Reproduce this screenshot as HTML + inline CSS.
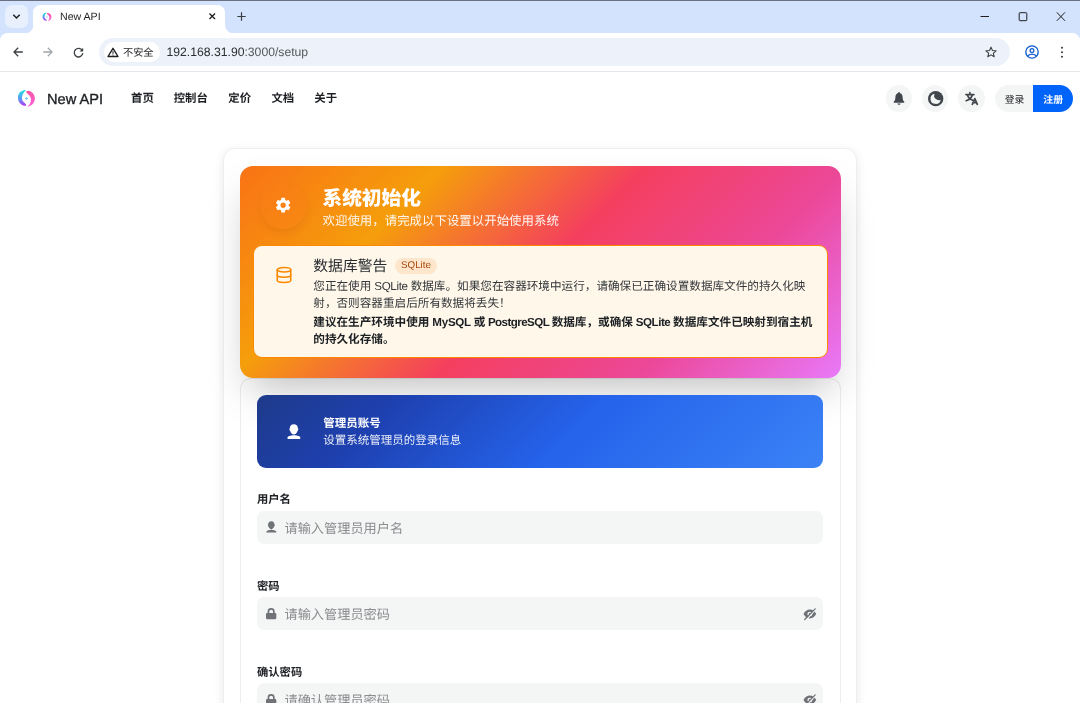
<!DOCTYPE html>
<html lang="zh-CN">
<head>
<meta charset="utf-8">
<title>New API</title>
<style>
*{box-sizing:border-box;margin:0;padding:0}
html,body{width:1080px;height:703px;overflow:hidden;background:#fff}
body{font-family:"Liberation Sans","Noto Sans CJK SC",sans-serif;color:#1c1f23;position:relative;-webkit-font-smoothing:antialiased;text-rendering:geometricPrecision}
#root{position:absolute;left:0;top:0;width:1080px;height:703px;will-change:transform}
.abs{position:absolute}
svg{position:absolute;overflow:visible}
/* browser chrome */
#topline{left:0;top:0;width:1080px;height:1px;background:#6b7180}
#tabstrip{left:0;top:0;width:1080px;height:44px;background:#d3e3fd}
#tab{left:33px;top:4.800px;width:192px;height:29.200px;background:#fff;border-radius:7.500px 7.500px 0 0}
#tabsearch{left:5px;top:5px;width:23px;height:23px;border-radius:7px;background:#e8f0fe}
#toolbar{left:0;top:33px;width:1080px;height:38px;background:#fff;border-radius:7.500px 7.500px 0 0}
#toolbarline{left:0;top:71px;width:1080px;height:1px;background:#e4e6e9}
#omni{left:99.400px;top:37.800px;width:911.100px;height:28.500px;border-radius:14.250px;background:#edf2fa}
#chip{left:104px;top:42px;width:56px;height:20px;border-radius:10px;background:#fff}
.la{white-space:pre}
.ctext{color:#1f1f1f;white-space:nowrap;line-height:16px}
/* page header */
.nav{font-size:11.4px;font-weight:700;color:#1c1f23;white-space:nowrap;line-height:16px;top:90.800px}
.circ{width:26.400px;height:26.700px;border-radius:50%;background:#f4f5f5;top:85px}
/* cards */
#outer{left:223px;top:148px;width:634px;height:600px;border-radius:12px;border:1px solid #eeeeef;background:#fff;box-shadow:0 3px 11px rgba(0,0,0,.09)}
#hero{left:240px;top:165.500px;width:601px;height:212px;border-radius:13px;background:linear-gradient(135deg,#f97316 0%,#f59e0b 25%,#f43f5e 50%,#ec4899 75%,#e879f9 100%);box-shadow:0 20px 40px -10px rgba(0,0,0,.25)}
#warn{left:253px;top:245px;width:574.8px;height:112.7px;border-radius:9px;background:#fff8ea;border:1px solid #fc8800}
#card2{left:240px;top:378px;width:601px;height:400px;border:1px solid rgba(28,31,35,.08);border-radius:11px;background:#fff}
#blue{left:257px;top:394.7px;width:566px;height:73.3px;border-radius:9px;background:linear-gradient(135deg,#1e3a8a 0%,#1e40af 22%,#2563eb 55%,#3b82f6 100%)}
.lbl{font-size:11.3px;font-weight:700;color:#1c1f23;left:257px;white-space:nowrap;line-height:16px}
.inp{left:257px;width:566px;height:33px;border-radius:7px;background:#f4f5f5}
.ph{font-size:13.200px;color:#8a8c8f;left:284.5px;white-space:nowrap;line-height:18px}
</style>
</head>
<body>
<div id="root">
<!-- ===== browser chrome ===== -->
<div class="abs" id="tabstrip"></div>
<div class="abs" id="topline"></div>
<div class="abs" id="tabsearch"></div>
<div class="abs" id="tab"></div>
<!-- tab outward bottom corners -->
<svg style="left:24.500px;top:24.500px" width="8.500" height="8.500" viewBox="0 0 6 6"><path d="M6 0V6H0A6 6 0 0 0 6 0Z" fill="#fff"/></svg>
<svg style="left:225px;top:24.500px" width="8.500" height="8.500" viewBox="0 0 6 6"><path d="M0 0V6H6A6 6 0 0 1 0 0Z" fill="#fff"/></svg>
<div class="abs" id="toolbar"></div>
<div class="abs" id="toolbarline"></div>
<div class="abs" id="omni"></div>
<div class="abs" id="chip"></div>
<div class="abs ctext" style="left:60px;top:8.5px;font-size:10.6px">New API</div>
<div class="abs ctext" style="left:123px;top:46px;font-size:10.200px">不安全</div>
<div class="abs ctext" style="left:166.500px;top:43.500px;font-size:12.200px;color:#2d2e30">192.168.31.90<span style="color:#55585c">:3000/setup</span></div>
<!-- chrome icons -->
<svg style="left:12px;top:12px" width="9" height="9" viewBox="0 0 9 9"><path d="M1.3 2.8L4.5 6 7.7 2.8" fill="none" stroke="#1f1f1f" stroke-width="1.5"/></svg>
<svg style="left:41.5px;top:11.5px" width="10" height="10" viewBox="5 5 19 19"><defs><linearGradient id="lgA" x1="0" y1="0" x2="0" y2="1"><stop offset="0" stop-color="#22e6e6"/><stop offset=".55" stop-color="#5b9bf0"/><stop offset="1" stop-color="#b537f7"/></linearGradient><linearGradient id="lgB" x1="0" y1="0" x2="0" y2="1"><stop offset="0" stop-color="#f857a6"/><stop offset="1" stop-color="#ff5ed8"/></linearGradient></defs><path d="M13.5 6C8 6.5 5.5 10 6 14.5C6.3 18.5 9.5 22 14 21.8C14.5 21 14 20 13 19.2C10.5 17.5 9.8 15.5 10 13.5C10.2 10.5 12 8 13.8 6.5Z" fill="url(#lgA)"/><path d="M14.3 7.6C15 6.5 17.5 6.5 19.5 8C22 10 23.2 12.5 22.8 15.5C22.3 19 19.5 22 15.5 22.8C17.5 21 19 18.5 19 15.5C19 12.5 16.5 10.5 14.8 9C14.2 8.5 14 8 14.3 7.6Z" fill="url(#lgB)"/><path d="M14.5 12.7L15.1 14 16.4 14.5 15.1 15 14.5 16.3 13.9 15 12.6 14.5 13.9 14Z" fill="#5bc0f5"/></svg>
<svg style="left:208.500px;top:13.400px" width="6.500" height="6.500" viewBox="0 0 7 7"><path d="M.5 .5L6.500 6.500M6.500 .5L.5 6.500" stroke="#1f1f1f" stroke-width="1.400" fill="none"/></svg>
<svg style="left:237.100px;top:12px" width="9" height="9" viewBox="0 0 9 9"><path d="M4.500 .3V8.700M.3 4.500H8.700" stroke="#3a3d42" stroke-width="1.200" fill="none"/></svg>
<!-- back / forward / reload -->
<svg style="left:13px;top:47px" width="10" height="10" viewBox="0 0 10 10"><path d="M9.8 5H1.2M5.2 .8L1 5 5.2 9.2" stroke="#3c4043" stroke-width="1.3" fill="none"/></svg>
<svg style="left:43px;top:47px" width="10" height="10" viewBox="0 0 10 10"><path d="M.2 5H8.8M4.8 .8L9 5 4.8 9.2" stroke="#a3a6aa" stroke-width="1.3" fill="none"/></svg>
<svg style="left:72.5px;top:46.5px" width="11" height="11" viewBox="0 0 11 11"><path d="M9.3 3.6A4.3 4.3 0 1 0 9.8 6.2" stroke="#3c4043" stroke-width="1.3" fill="none"/><path d="M10.2 .8V4.4H6.6Z" fill="#3c4043"/></svg>
<!-- not-secure triangle -->
<svg style="left:107.300px;top:47px" width="12" height="10.400" viewBox="0 0 12 10.400"><path d="M6 1.300L11 9.500H1Z" fill="none" stroke="#1f1f1f" stroke-width="1.400" stroke-linejoin="round"/><path d="M6 4.200V6.800M6 7.500V8.500" stroke="#1f1f1f" stroke-width="1.100"/></svg>
<!-- star -->
<svg style="left:984.5px;top:46px" width="12" height="12" viewBox="0 0 12 12"><path d="M6 1.1L7.45 4.5 11.1 4.8 8.35 7.2 9.2 10.8 6 8.9 2.8 10.8 3.65 7.2 .9 4.8 4.55 4.5Z" fill="none" stroke="#3c4043" stroke-width="1.1" stroke-linejoin="round"/></svg>
<!-- profile -->
<svg style="left:1025px;top:45px" width="14" height="14" viewBox="0 0 14 14"><defs><clipPath id="pc"><circle cx="7" cy="7" r="6.2"/></clipPath></defs><circle cx="7" cy="7" r="6.2" fill="none" stroke="#0b57d0" stroke-width="1.3"/><circle cx="7" cy="5.6" r="1.9" fill="none" stroke="#0b57d0" stroke-width="1.2"/><path d="M2.4 11.6C3.6 9.7 5.2 9.2 7 9.2S10.4 9.7 11.6 11.6" fill="none" stroke="#0b57d0" stroke-width="1.2" clip-path="url(#pc)"/></svg>
<!-- kebab -->
<svg style="left:1060px;top:46px" width="4" height="13" viewBox="0 0 4 13"><circle cx="2" cy="1.8" r="1.05" fill="#3c4043"/><circle cx="2" cy="6.2" r="1.05" fill="#3c4043"/><circle cx="2" cy="10.8" r="1.05" fill="#3c4043"/></svg>
<!-- window controls -->
<svg style="left:980px;top:12px" width="90" height="10" viewBox="0 0 90 10"><path d="M.5 4.5H9" stroke="#1f1f1f" stroke-width="1"/><rect x="39.2" y=".7" width="7.6" height="8" rx=".8" fill="none" stroke="#1f1f1f" stroke-width="1"/><path d="M76.8 .4L85 8.8M85 .4L76.8 8.8" stroke="#1f1f1f" stroke-width="1"/></svg>

<!-- ===== page header ===== -->
<svg style="left:12px;top:84px" width="30" height="28" viewBox="0 0 30 28"><path d="M13.5 6C8 6.5 5.5 10 6 14.5C6.3 18.5 9.5 22 14 21.8C14.5 21 14 20 13 19.2C10.5 17.5 9.8 15.5 10 13.5C10.2 10.5 12 8 13.8 6.5Z" fill="url(#lgA)"/><path d="M14.3 7.6C15 6.5 17.5 6.5 19.5 8C22 10 23.2 12.5 22.8 15.5C22.3 19 19.5 22 15.5 22.8C17.5 21 19 18.5 19 15.5C19 12.5 16.5 10.5 14.8 9C14.2 8.5 14 8 14.3 7.6Z" fill="url(#lgB)"/><path d="M14.5 12.7L15.1 14 16.4 14.5 15.1 15 14.5 16.3 13.9 15 12.6 14.5 13.9 14Z" fill="#5bc0f5"/></svg>
<div class="abs" id="brand" style="left:47px;top:91px;font-size:14.6px;font-weight:400;color:#1c1f23;line-height:18px;white-space:nowrap;-webkit-text-stroke:.35px #1c1f23">New API</div>
<div class="abs nav" style="left:131px">首页</div>
<div class="abs nav" style="left:173.7px">控制台</div>
<div class="abs nav" style="left:228.3px">定价</div>
<div class="abs nav" style="left:271.4px">文档</div>
<div class="abs nav" style="left:314.3px">关于</div>
<div class="abs circ" style="left:886px"></div>
<div class="abs circ" style="left:922px"></div>
<div class="abs circ" style="left:958.3px"></div>
<!-- bell -->
<svg style="left:893px;top:92px" width="12" height="13" viewBox="0 0 12 13"><path d="M6 .2C6.7 .2 7.2 .7 7.2 1.3C8.8 1.9 9.6 3.4 9.6 5.2C9.6 7.6 10.2 8.9 11.3 9.8C11.6 10.1 11.4 10.7 10.9 10.7H1.1C.6 10.7 .4 10.1 .7 9.8C1.8 8.9 2.4 7.6 2.4 5.2C2.4 3.4 3.2 1.9 4.8 1.3C4.8 .7 5.3 .2 6 .2Z" fill="#41464c"/><path d="M4.3 11.4H7.7C7.5 12.3 6.8 12.8 6 12.8S4.5 12.3 4.3 11.4Z" fill="#41464c"/></svg>
<!-- moon -->
<svg style="left:927.500px;top:90.500px" width="15.400" height="15.400" viewBox="-7.700 -7.700 15.400 15.400"><circle cx="0" cy="0" r="7.650" fill="#41464c"/><path d="M-1.281 -5.040A5.2 5.2 0 1 0 5.040 1.281A4.9 4.9 0 0 1 -1.281 -5.040Z" fill="#f4f5f5"/></svg>
<!-- translate -->
<svg style="left:965px;top:92px" width="13.5" height="13" viewBox="0 0 13.5 13"><path d="M.9 2.6H9M4.9 .6V2.6M2.4 2.800C3 5.200 4.800 7.200 7.600 8.200M7.400 2.800C6.800 5.400 4.600 7.800 1.100 8.800" fill="none" stroke="#41464c" stroke-width="1.600" stroke-linecap="round"/><path d="M7.300 12.300L9.800 6.600 12.300 12.300M8.100 10.700H11.500" fill="none" stroke="#41464c" stroke-width="1.700" stroke-linecap="round" stroke-linejoin="round"/></svg>
<div class="abs" style="left:994.600px;top:85px;width:39px;height:27px;border-radius:13.500px 0 0 13.500px;background:#f4f5f5"></div>
<div class="abs" style="left:1033.300px;top:85px;width:40px;height:27px;border-radius:0 13.500px 13.500px 0;background:#0064fa"></div>
<div class="abs" style="left:1004.800px;top:93.800px;font-size:9.800px;color:#1c1f23;line-height:14px;white-space:nowrap">登录</div>
<div class="abs" style="left:1043.300px;top:93.800px;font-size:10px;font-weight:700;color:#fff;line-height:14px;white-space:nowrap">注册</div>

<!-- ===== cards ===== -->
<div class="abs" id="outer"></div>
<div class="abs" id="card2"></div>
<div class="abs" id="hero"></div>
<div class="abs" style="left:260px;top:182px;width:46.5px;height:46.5px;border-radius:50%;background:rgba(249,125,22,.35);box-shadow:0 5px 10px -2px rgba(150,60,0,.16)"></div>
<!-- gear -->
<svg style="left:273.850px;top:196.250px" width="18.300" height="18.300" viewBox="0 0 24 24"><path fill="#fff" d="M19.14 12.94c.04-.3.06-.61.06-.94 0-.32-.02-.64-.07-.94l2.03-1.58a.49.49 0 0 0 .12-.61l-1.92-3.32a.488.488 0 0 0-.59-.22l-2.39.96c-.5-.38-1.03-.7-1.62-.94l-.36-2.54a.484.484 0 0 0-.48-.41h-3.84c-.24 0-.43.17-.47.41l-.36 2.54c-.59.24-1.13.57-1.62.94l-2.39-.96c-.22-.08-.47 0-.59.22L2.74 8.87c-.12.21-.08.47.12.61l2.03 1.58c-.05.3-.09.63-.09.94s.02.64.07.94l-2.03 1.58a.49.49 0 0 0-.12.61l1.92 3.32c.12.22.37.29.59.22l2.39-.96c.5.38 1.03.7 1.62.94l.36 2.54c.05.24.24.41.48.41h3.84c.24 0 .44-.17.47-.41l.36-2.54c.59-.24 1.13-.56 1.62-.94l2.39.96c.22.08.47 0 .59-.22l1.92-3.32c.12-.22.07-.47-.12-.61l-2.01-1.58zM12 15.6c-1.98 0-3.600-1.620-3.600-3.600s1.620-3.600 3.600-3.600 3.600 1.620 3.600 3.600-1.620 3.600-3.600 3.600z"/></svg>
<div class="abs" id="htitle" style="left:322.5px;top:186px;font-size:19.7px;font-weight:900;color:#fff;line-height:26px;white-space:nowrap">系统初始化</div>
<div class="abs" id="hsub" style="left:322.5px;top:211.700px;font-size:12.450px;color:rgba(255,255,255,.93);line-height:18px;white-space:nowrap">欢迎使用，请完成以下设置以开始使用系统</div>
<div class="abs" id="warn"></div>
<!-- database -->
<svg style="left:274.700px;top:266.400px" width="18" height="18" viewBox="0 0 24 24" fill="none" stroke="#fc8800" stroke-width="2.100" stroke-linecap="round" stroke-linejoin="round"><ellipse cx="12" cy="5" rx="9" ry="3"/><path d="M3 5V19A9 3 0 0 0 21 19V5"/><path d="M3 12A9 3 0 0 0 21 12"/></svg>
<div class="abs" id="wtitle" style="left:313.3px;top:256.5px;font-size:14.800px;color:#282b30;line-height:20px;white-space:nowrap;font-weight:400">数据库警告</div>
<div class="abs" style="left:394.8px;top:257.6px;width:42px;height:16.3px;border-radius:8.2px;background:#fde6cb"></div>
<div class="abs" id="tag" style="left:401px;top:259.8px;font-size:9.8px;color:#a8480f;line-height:12px;white-space:nowrap">SQLite</div>
<div class="abs" id="wbody" style="left:313.3px;top:277.5px;width:510px;font-size:11.62px;color:#33363b;line-height:17px;white-space:nowrap">您正在使用<span class="la" style="letter-spacing:-.33px"> SQLite </span>数据库。如果您在容器环境中运行，请确保已正确设置数据库文件的持久化映<br>射，否则容器重启后所有数据将丢失！</div>
<div class="abs" id="wbold" style="left:313.3px;top:314px;width:510px;font-size:11.62px;font-weight:700;color:#1c1f23;line-height:17px;white-space:nowrap">建议在生产环境中使用<span class="la" style="letter-spacing:-.28px"> MySQL </span>或<span class="la" style="letter-spacing:-.58px"> PostgreSQL </span>数据库，或确保<span class="la" style="letter-spacing:-.46px"> SQLite </span>数据库文件已映射到宿主机<br>的持久化存储。</div>

<div class="abs" id="blue"></div>
<!-- user white -->
<svg style="left:287px;top:423.5px" width="13.800" height="15" viewBox="0 0 13.800 15"><path d="M6.850 .2C9.300 .2 10.800 1.800 10.800 3.900C10.800 4.300 11.350 4.600 11.350 5.300C11.350 6.100 10.850 6.500 10.600 6.700C10.100 8.800 8.500 10.400 6.850 10.400S3.600 8.800 3.100 6.700C2.850 6.500 2.350 6.100 2.350 5.300C2.350 4.600 2.900 4.300 2.900 3.900C2.900 1.800 4.400 .2 6.850 .2Z" fill="#fff"/><path d="M.4 14C.4 12.300 3.500 11.300 6.900 11.300S13.400 12.300 13.400 14C13.400 14.600 13 14.900 12.500 14.900H1.300C.8 14.900 .4 14.600 .4 14Z" fill="#fff"/></svg>
<div class="abs" id="btitle" style="left:323.2px;top:415.800px;font-size:11.5px;font-weight:700;color:#fff;line-height:16px;white-space:nowrap">管理员账号</div>
<div class="abs" id="bsub" style="left:323.2px;top:432.700px;font-size:11.5px;color:rgba(255,255,255,.9);line-height:16px;white-space:nowrap">设置系统管理员的登录信息</div>

<div class="abs lbl" style="top:492.200px">用户名</div>
<div class="abs inp" style="top:510.7px"></div>
<div class="abs ph" style="top:519.600px">请输入管理员用户名</div>
<div class="abs lbl" style="top:578.500px">密码</div>
<div class="abs inp" style="top:596.9px"></div>
<div class="abs ph" style="top:605.800px">请输入管理员密码</div>
<div class="abs lbl" style="top:664.500px">确认密码</div>
<div class="abs inp" style="top:683px"></div>
<div class="abs ph" style="top:691.800px">请确认管理员密码</div>
<!-- input icons -->
<svg style="left:266px;top:521.100px" width="10.700" height="11.700" viewBox="0 0 13.800 15"><path d="M6.850 .2C9.300 .2 10.800 1.800 10.800 3.900C10.800 4.300 11.350 4.600 11.350 5.300C11.350 6.100 10.850 6.500 10.600 6.700C10.100 8.800 8.500 10.400 6.850 10.400S3.600 8.800 3.100 6.700C2.850 6.500 2.350 6.100 2.350 5.300C2.350 4.600 2.900 4.300 2.900 3.900C2.900 1.800 4.400 .2 6.850 .2Z" fill="#6f7277"/><path d="M6.200 10V12H7.600V10Z" fill="#6f7277" opacity=".55"/><path d="M.4 14C.4 12.300 3.500 11.700 6.900 11.700S13.400 12.300 13.400 14C13.400 14.600 13 14.900 12.500 14.900H1.300C.8 14.900 .4 14.600 .4 14Z" fill="#6f7277"/></svg>
<svg style="left:266.300px;top:607.9px" width="10.300" height="11.200" viewBox="0 0 10.300 11.200"><path d="M2.450 5.600V3.500C2.450 2 3.600 .85 5.150 .85S7.850 2 7.850 3.500V5.600" fill="none" stroke="#6f7277" stroke-width="1.700"/><rect x="0" y="5.100" width="10.300" height="6.100" rx="1.100" fill="#6f7277"/></svg>
<svg style="left:266.300px;top:693.9px" width="10.300" height="11.200" viewBox="0 0 10.300 11.200"><path d="M2.450 5.600V3.500C2.450 2 3.600 .85 5.150 .85S7.850 2 7.850 3.500V5.600" fill="none" stroke="#6f7277" stroke-width="1.700"/><rect x="0" y="5.100" width="10.300" height="6.100" rx="1.100" fill="#6f7277"/></svg>
<!-- eye closed -->
<svg style="left:802.500px;top:607.5px" width="13.500" height="12" viewBox="0 0 13.500 12"><path d="M.5 6C1.900 3.200 4.200 1.600 6.850 1.600S11.800 3.200 13.200 6C11.800 8.800 9.500 10.400 6.850 10.400S1.900 8.800 .5 6Z" fill="#6d7075"/><ellipse cx="6.850" cy="6" rx="2.500" ry="2.300" fill="#f4f5f5"/><circle cx="6.850" cy="6" r="1.100" fill="#6d7075"/><path d="M3.300 11.700L12.700 1.300" stroke="#f4f5f5" stroke-width="1.300"/><path d="M1.700 11.500L12.200 .8" stroke="#6d7075" stroke-width="1.200" stroke-linecap="round"/></svg>
<svg style="left:802.500px;top:693.5px" width="13.500" height="12" viewBox="0 0 13.500 12"><path d="M.5 6C1.900 3.200 4.200 1.600 6.850 1.600S11.800 3.200 13.200 6C11.800 8.800 9.500 10.400 6.850 10.400S1.900 8.800 .5 6Z" fill="#6d7075"/><ellipse cx="6.850" cy="6" rx="2.500" ry="2.300" fill="#f4f5f5"/><circle cx="6.850" cy="6" r="1.100" fill="#6d7075"/><path d="M3.300 11.700L12.700 1.300" stroke="#f4f5f5" stroke-width="1.300"/><path d="M1.700 11.500L12.200 .8" stroke="#6d7075" stroke-width="1.200" stroke-linecap="round"/></svg>
</div>
</body>
</html>
